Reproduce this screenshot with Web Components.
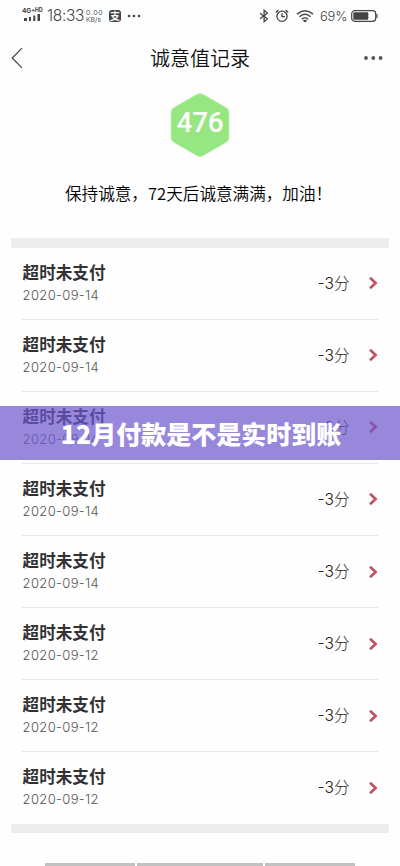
<!DOCTYPE html>
<html lang="zh-CN">
<head>
<meta charset="utf-8">
<title>诚意值记录</title>
<style>
html,body{margin:0;background:#fefefe}
body{width:400px;height:866px;overflow:hidden}
</style>
</head>
<body>
<record-page></record-page>
<script>
const define = (name, html) => customElements.define(name, class extends HTMLElement {
  constructor() {
    super();
    const t = document.createElement('template');
    t.innerHTML = html;
    this.attachShadow({mode: 'open'}).append(t.content.cloneNode(true));
  }
});

define('status-bar', `
<style>
:host{display:flex;height:32px;box-sizing:border-box;padding:0 22px 0 22px;color:#444;font-family:Inter,"Liberation Sans",sans-serif;align-items:flex-start}
.sig{width:22px;display:flex;flex-direction:column;padding-top:8px}
.net{font-size:6.6px;line-height:6px;font-weight:700;white-space:nowrap;letter-spacing:-.1px}
.net sup{font-size:5.5px;line-height:0;vertical-align:1.5px}
.sig svg{margin:0 0 0 2px}
.time{font-size:15.5px;line-height:18px;margin:7px 0 0 3px;width:39px;letter-spacing:-.35px;font-weight:300;white-space:nowrap}
.rate{font-size:6.8px;line-height:7px;margin-top:9px;width:22px;color:#555;white-space:nowrap}
.rate div:first-child{letter-spacing:.7px}
.pay{width:12px;height:12px;border-radius:3px;background:#444;color:#fff;font:700 10px/12px "Noto Sans CJK SC",sans-serif;text-align:center;margin:10px 0 0 1px}
.dots{margin:14px 0 0 6px}
.right{margin-left:auto;display:flex;align-items:center;padding-top:7px;height:17px}
.pct{font-size:13px;margin:1px 4px 0 6px;width:27px;letter-spacing:-.2px;white-space:nowrap;color:#444;font-weight:300}
svg{display:block}
</style>
<div class="sig"><div class="net">4G<sup>+HD</sup></div><svg width="17" height="7"><path d="M0 4h3v3H0zM5 3h2v4H5zM9.3 1.5h2V7h-2zM13.5 0h2.5v7h-2.5z" fill="#444"/></svg></div>
<div class="time">18:33</div>
<div class="rate"><div>0.00</div><div>KB/s</div></div>
<div class="pay">支</div>
<svg class="dots" width="14" height="4"><circle cx="2" cy="2" r="1.3" fill="#444"/><circle cx="7" cy="2" r="1.3" fill="#444"/><circle cx="12" cy="2" r="1.3" fill="#444"/></svg>
<div class="right">
<svg width="10" height="14" style="margin-right:-1px" fill="none" stroke="#444" stroke-width="1.25"><path d="M1 4.2 8.4 9.7 5.1 12.7V1.2L8.4 4.2 1 9.8"/></svg>
<svg width="14" height="14" style="margin-left:7px" fill="none" stroke="#444" stroke-width="1.3"><circle cx="7" cy="7.3" r="5.1"/><path d="M7 4.3v3.3h3M.8 3.4 3.4 1M10.6 1l2.6 2.4"/></svg>
<svg width="18" height="14" style="margin-left:7px" fill="none" stroke="#444" stroke-width="1.4"><path d="M1 5.1q8-6.7 16 0M3.4 7.7q5.6-4.7 11.2 0M5.8 10.2q3.2-2.6 6.4 0"/><path d="m9 13.5-2.3-2q2.3-1.7 4.6 0z" fill="#444" stroke="none"/></svg>
<span class="pct">69%</span>
<svg width="27" height="12"><rect x=".7" y=".7" width="24" height="10.6" rx="3" fill="none" stroke="#444" stroke-width="1.2"/><rect x="2.3" y="2.3" width="15" height="7.4" rx="1" fill="#444"/><path d="M26 4v4" stroke="#444" stroke-width="1.2"/></svg>
</div>`);

define('nav-bar', `
<style>
:host{display:grid;grid-template-columns:60px 1fr 60px;height:52px;align-items:center;color:#111}
h1{margin:0;text-align:center;font:350 20px/28px "Noto Sans CJK SC",sans-serif}
svg{display:block}
.more{justify-self:end;margin-right:17px}
</style>
<svg width="24" height="22" style="margin-left:10px;margin-top:-1px"><path d="M12 1.2 2.2 11 12 20.8" fill="none" stroke="#444" stroke-width="1.2"/></svg>
<h1><slot></slot></h1>
<svg class="more" width="20" height="6"><g fill="#555"><circle cx="3" cy="3" r="1.9"/><circle cx="10.3" cy="3" r="1.9"/><circle cx="17.6" cy="3" r="1.9"/></g></svg>`);

define('score-badge', `
<style>
:host{display:grid;width:62px;height:66px;margin:8px auto 0;place-items:center}
svg,span{grid-area:1/1}
span{font:500 28px/30px Roboto,sans-serif;color:#fff;margin-top:-4px;letter-spacing:-.2px}
</style>
<svg width="62" height="66"><path d="M27.8 2.4Q31 .6 34.2 2.4L57 15.5Q60 17.2 60 20.5V45.5Q60 48.8 57 50.5L34.2 63.6Q31 65.4 27.8 63.6L5 50.5Q2 48.8 2 45.5V20.5Q2 17.2 5 15.5Z" fill="#96e782" stroke="#b9f0ae" stroke-width=".6"/></svg>
<span><slot></slot></span>`);

define('record-row', `
<style>
:host{display:flex;height:72.15px;box-sizing:border-box;margin:0 22px;border-bottom:1px solid #e8e8e8;justify-content:space-between}
:host(:last-of-type){border-bottom-color:transparent}
.main{padding:12px 0 0 .6px}
.title{font:700 16.6px/24px "Noto Sans CJK SC",sans-serif;color:#333}
.date{font:300 13px/23px Inter,sans-serif;color:#555;letter-spacing:.36px}
.side{display:flex;align-items:center;height:71px}
.score{font:300 15.6px/24px Inter,"Noto Sans CJK SC",sans-serif;color:#222;padding-top:1px}
svg{display:block;margin-left:18.5px}
</style>
<div class="main"><div class="title"><slot></slot></div><div class="date"><slot name="date"></slot></div></div>
<div class="side"><span class="score"><slot name="score"></slot></span><svg width="10" height="14"><path d="m2 1.8 5.6 5.2L2 12.2" fill="none" stroke="#c2505f" stroke-width="2.6"/></svg></div>`);

define('caption-band', `
<style>
:host{display:flex;position:absolute;left:0;top:406px;width:400px;height:54px;box-sizing:border-box;padding-left:2px;align-items:center;justify-content:center;background:rgba(108,85,205,.7);color:#fff;font:900 25px/36px "Noto Sans CJK SC",sans-serif;white-space:nowrap}
</style><span><slot></slot></span>`);

const dates = ['14','14','14','14','14','12','12','12'];
define('record-page', `
<style>
:host{display:flex;flex-direction:column;position:relative;width:400px;height:866px;overflow:hidden;background:#fefefe}
.message{font:350 16.6px/24px "Noto Sans CJK SC",sans-serif;color:#000;margin:23px 0 0;padding-left:65px;height:57px;white-space:nowrap}
.divider{height:9.5px;flex:none;background:#ededed;margin:0 11px}
.end{margin-top:-.8px;height:9px}
.foot{display:grid;grid-template-columns:90px 126px 90px;gap:2px;margin:auto 45px 0;height:3px}
.foot i{background:#c2c2c2}
</style>
<status-bar></status-bar>
<nav-bar>诚意值记录</nav-bar>
<score-badge>476</score-badge>
<div class="message">保持诚意，72天后诚意满满，加油！</div>
<div class="divider"></div>
<section>${dates.map(d => `<record-row>超时未支付<span slot="date">2020-09-${d}</span><span slot="score">-3分</span></record-row>`).join('')}</section>
<div class="divider end"></div>
<div class="foot"><i></i><i></i><i></i></div>
<caption-band>12月付款是不是实时到账</caption-band>`);
</script>
</body>
</html>
